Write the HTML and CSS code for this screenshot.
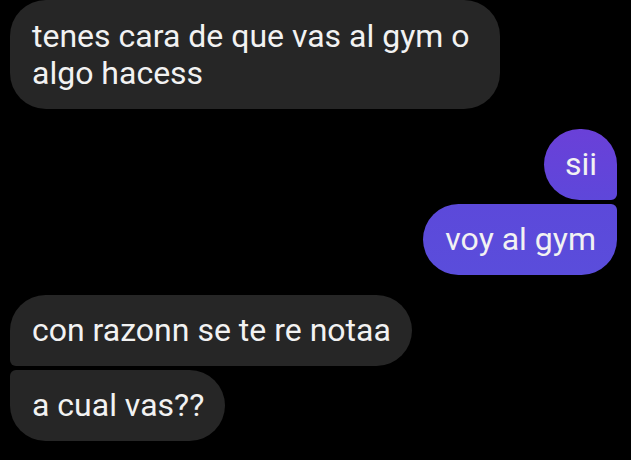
FILE: index.html
```html
<!DOCTYPE html>
<html>
<head>
<meta charset="utf-8">
<link rel="stylesheet" href="styles.css">
</head>
<body>
<div class="chat">
  <div class="group in">
    <div class="bubble solo">tenes cara de que vas al gym o<br>algo hacess</div>
  </div>
  <div class="group out">
    <div class="bubble first sii">sii</div>
    <div class="bubble last voy">voy al gym</div>
  </div>
  <div class="group in">
    <div class="bubble first">con razonn se te re notaa</div>
    <div class="bubble last">a cual vas??</div>
  </div>
</div>
</body>
</html>
```
FILE: styles.css
```css
html, body {
  margin: 0;
  padding: 0;
  background: #000;
}
.chat {
  width: 631px;
  height: 460px;
  box-sizing: border-box;
  padding: 0 14px 0 10px;
  display: flex;
  flex-direction: column;
  gap: 20px;
  font-family: Roboto, "Noto Sans", sans-serif;
  overflow: hidden;
}
.group {
  display: flex;
  flex-direction: column;
  gap: 4px;
}
.group.in { align-items: flex-start; }
.group.out { align-items: flex-end; }
.bubble {
  font-size: 32px;
  line-height: 37px;
  padding: 17px 21px 17px 22px;
  color: #f2f2f2;
  border-radius: 36px;
}
.in .bubble { background: #262626; }
.in .bubble.solo { padding: 18px 30px 17px 22px; }
.in .bubble.first { border-bottom-left-radius: 6px; }
.in .bubble.last { border-top-left-radius: 6px; }
.out .bubble.first { border-bottom-right-radius: 6px; }
.out .bubble.last { border-top-right-radius: 6px; }
.out .sii {
  background: linear-gradient(180deg, #6a40d8 0%, #5e47da 100%);
  padding-left: 21px;
  padding-right: 20px;
}
.out .voy {
  background: linear-gradient(180deg, #5c49da 0%, #5a4ddb 100%);
}
```
